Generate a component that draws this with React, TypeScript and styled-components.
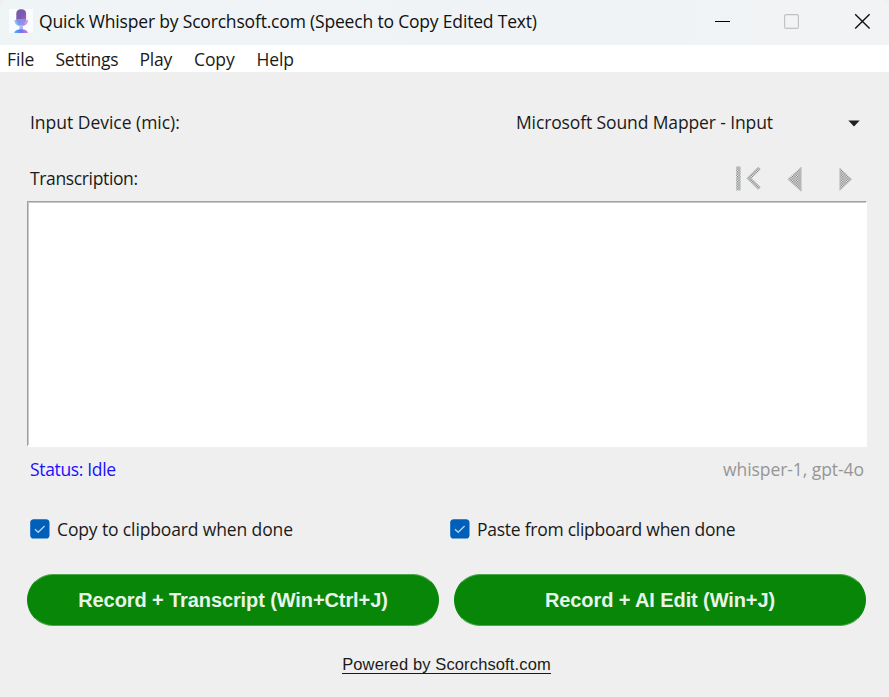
import React from 'react';
import styled, { createGlobalStyle } from 'styled-components';

const GlobalStyle = createGlobalStyle`
  * { box-sizing: border-box; }
  html, body { margin: 0; padding: 0; }
  body {
    background: #f0f0f0;
    font-family: "Open Sans", "Noto Sans", sans-serif;
    overflow: hidden;
  }
`;

const Window = styled.div`
  width: 889px;
  height: 697px;
  display: flex;
  flex-direction: column;
  background: #efefef;
  color: #1a1a1a;
`;

const Text = styled.span<{ $track?: number; $color?: string }>`
  display: block;
  white-space: nowrap;
  font-size: 17.5px;
  letter-spacing: ${(p) => p.$track ?? -0.4}px;
  line-height: 24px;
  color: ${(p) => p.$color ?? '#1a1a1a'};
`;

const TitleBar = styled.header`
  height: 45px;
  flex: none;
  display: flex;
  align-items: flex-start;
  justify-content: space-between;
  background: linear-gradient(90deg, #eff4f5 0%, #eff3f5 65%, #f1f3f5 85%);
  border-top-left-radius: 8px;
  border-top-right-radius: 8px;
`;

const TitleGroup = styled.div`
  display: flex;
  padding: 9px 0 0 9px;
  gap: 6px;
`;

const WindowControls = styled.div`
  display: flex;
  gap: 53px;
  padding: 13px 20px 0 0;
`;

const ControlIcon = styled.svg`
  display: block;
  width: 16px;
  height: 16px;
  overflow: visible;
`;

const MenuBar = styled.nav`
  height: 27px;
  flex: none;
  display: flex;
  padding: 2px 0 0 7px;
  background: #ffffff;
`;

const MenuItem = styled.div<{ $width: number }>`
  width: ${(p) => p.$width}px;
`;

const Content = styled.main`
  flex: 1;
  display: flex;
  flex-direction: column;
  padding: 38px 22px 0 27px;
`;

const Row = styled.div<{ $height: number; $top?: number }>`
  height: ${(p) => p.$height}px;
  flex: none;
  display: flex;
  justify-content: space-between;
  padding: ${(p) => p.$top ?? 0}px 3px 0;
`;

const DeviceSelect = styled.div`
  width: 348px;
  display: flex;
  justify-content: space-between;
`;

const SelectArrow = styled.svg`
  display: block;
  width: 12px;
  height: 7px;
  margin-top: 10px;
  margin-right: 4px;
`;

const NavIcons = styled.svg`
  display: block;
  width: 120px;
  height: 28px;
  margin-right: 12px;
`;

const Transcript = styled.div`
  height: 246px;
  flex: none;
  background: #ffffff;
  border-style: solid;
  border-width: 1.5px 1px 2px 1.5px;
  border-color: #a0a0a0 #ffffff #ffffff #a0a0a0;
  box-shadow: inset 1px 1px 0 #c8c8c8;
`;

const CheckColumns = styled.div`
  height: 57px;
  flex: none;
  display: grid;
  grid-template-columns: 420px 1fr;
  padding-left: 3px;
`;

const CheckLabel = styled.div`
  display: flex;
  gap: 7px;
`;

const CheckBox = styled.svg`
  display: block;
  width: 20px;
  height: 20px;
  margin-top: 2px;
`;

const ButtonRow = styled.div`
  display: grid;
  grid-template-columns: 412px 412px;
  gap: 15px;
`;

const RecordButton = styled.button`
  height: 52px;
  padding: 1px 0 0;
  border: 1px solid #4aa84a;
  border-left-color: #078607;
  border-right-color: #078607;
  border-radius: 26px;
  background: #078607;
  color: #e8f4e8;
  font: bold 20px "Liberation Sans", Arial, sans-serif;
  letter-spacing: -0.1px;
  white-space: nowrap;
`;

const Footer = styled.footer`
  display: flex;
  justify-content: center;
  padding: 29px 1px 0 0;
`;

const FooterLink = styled.span`
  height: 19px;
  border-bottom: 1.5px solid #1a1a1a;
  font-family: "Liberation Sans", Arial, sans-serif;
  font-size: 16.5px;
  line-height: 19px;
  letter-spacing: 0.13px;
  white-space: nowrap;
`;

function MicLogo() {
  return (
    <svg width="24" height="24" viewBox="0 0 24 24">
      <defs>
        <linearGradient id="micHead" x1="0" y1="0" x2="1" y2="1">
          <stop offset="0" stopColor="#7a5a9e" />
          <stop offset="0.5" stopColor="#7b5ab4" />
          <stop offset="1" stopColor="#b866c0" />
        </linearGradient>
        <linearGradient id="micBase" x1="0" y1="0" x2="1" y2="0">
          <stop offset="0" stopColor="#4cc0f5" />
          <stop offset="0.5" stopColor="#6a72ee" />
          <stop offset="1" stopColor="#e07ada" />
        </linearGradient>
      </defs>
      <rect width="24" height="24" fill="#fafcff" />
      <rect x="7.3" y="0.3" width="9.8" height="15" rx="4.2" fill="url(#micHead)" />
      <path d="M7.3 10H17.1V12Q16 15.5 12.2 15.5Q8.5 15.5 7.3 12Z" fill="#8c9cee" opacity="0.8" />
      <path d="M6.3 11Q6.6 16.2 12.2 16.2Q18 16.2 18.2 11" fill="none" stroke="url(#micBase)" strokeWidth="1.8" opacity="0.8" />
      <rect x="10.5" y="16" width="3.5" height="5" fill="#a9b8f5" />
      <path d="M5 24Q6 20.2 12 20.2Q18.500 20.2 19 24Z" fill="url(#micBase)" />
    </svg>
  );
}

function CheckMark() {
  return (
    <CheckBox viewBox="0 0 20 20">
      <rect x="0.2" y="0.2" width="19.3" height="19.3" rx="3.6" fill="#005fb8" />
      <path d="M5 10.2L8.2 13.3L14.6 7" fill="none" stroke="#b4d7f2" strokeWidth="1.3" />
    </CheckBox>
  );
}

const menus = [
  { label: 'File', width: 48.5, track: -0.1 },
  { label: 'Settings', width: 84, track: -0.25 },
  { label: 'Play', width: 54.5, track: -0.2 },
  { label: 'Copy', width: 62.5, track: -0.1 },
  { label: 'Help', width: 50, track: -0.1 },
];

export default function App() {
  return (
    <Window>
      <GlobalStyle />
      <TitleBar>
        <TitleGroup>
          <MicLogo />
          <Text $track={-0.18} $color="#111">Quick Whisper by Scorchsoft.com (Speech to Copy Edited Text)</Text>
        </TitleGroup>
        <WindowControls>
          <ControlIcon viewBox="0 0 16 16">
            <path d="M0 8.5H15" stroke="#000" />
          </ControlIcon>
          <ControlIcon viewBox="0 0 16 16">
            <rect x="0.6" y="1.6" width="13.8" height="13.8" rx="1.5" fill="none" stroke="#c0c2c4" strokeWidth="1.2" />
          </ControlIcon>
          <ControlIcon viewBox="0 0 16 16">
            <path d="M2.2 1.2L16.6 15.6M16.6 1.2L2.2 15.6" stroke="#111" strokeWidth="1.4" />
          </ControlIcon>
        </WindowControls>
      </TitleBar>
      <MenuBar>
        {menus.map((m) => (
          <MenuItem key={m.label} $width={m.width}>
            <Text $track={m.track}>{m.label}</Text>
          </MenuItem>
        ))}
      </MenuBar>
      <Content>
        <Row $height={56}>
          <Text $track={-0.02}>Input Device (mic):</Text>
          <DeviceSelect>
            <Text $track={-0.12}>Microsoft Sound Mapper - Input</Text>
            <SelectArrow viewBox="0 0 12 7">
              <path d="M0.3 0.5H11.7L6 6.5Z" fill="#1f1f1f" />
            </SelectArrow>
          </DeviceSelect>
        </Row>
        <Row $height={35}>
          <Text $track={-0.36}>Transcription:</Text>
          <NavIcons viewBox="0 0 120 28">
            <defs>
              <pattern id="dither" width="2.5" height="2.5" patternUnits="userSpaceOnUse">
                <rect width="2.5" height="2.5" fill="#eaeaea" />
                <rect width="1.25" height="1.25" fill="#7c8082" />
                <rect x="1.25" y="1.25" width="1.25" height="1.25" fill="#7c8082" />
              </pattern>
            </defs>
            <path d="M4.2 0.5H8.6V24.5H4.2Z" fill="url(#dither)" />
            <path d="M27.500 2L17 12.2L27.500 22.5" fill="none" stroke="url(#dither)" strokeWidth="3.6" />
            <path d="M69.500 0.5V26L55.500 13.2Z" fill="url(#dither)" />
            <path d="M107.500 1.5V25L120 13.2Z" fill="url(#dither)" />
          </NavIcons>
        </Row>
        <Transcript />
        <Row $height={70} $top={10}>
          <Text $track={-0.34} $color="#1a10ff">Status: Idle</Text>
          <Text $track={-0.06} $color="#969696">whisper-1, gpt-4o</Text>
        </Row>
        <CheckColumns>
          <CheckLabel>
            <CheckMark />
            <Text $track={-0.13}>Copy to clipboard when done</Text>
          </CheckLabel>
          <CheckLabel>
            <CheckMark />
            <Text $track={-0.26}>Paste from clipboard when done</Text>
          </CheckLabel>
        </CheckColumns>
        <ButtonRow>
          <RecordButton>Record + Transcript (Win+Ctrl+J)</RecordButton>
          <RecordButton>Record + AI Edit (Win+J)</RecordButton>
        </ButtonRow>
        <Footer>
          <FooterLink>Powered by Scorchsoft.com</FooterLink>
        </Footer>
      </Content>
    </Window>
  );
}
